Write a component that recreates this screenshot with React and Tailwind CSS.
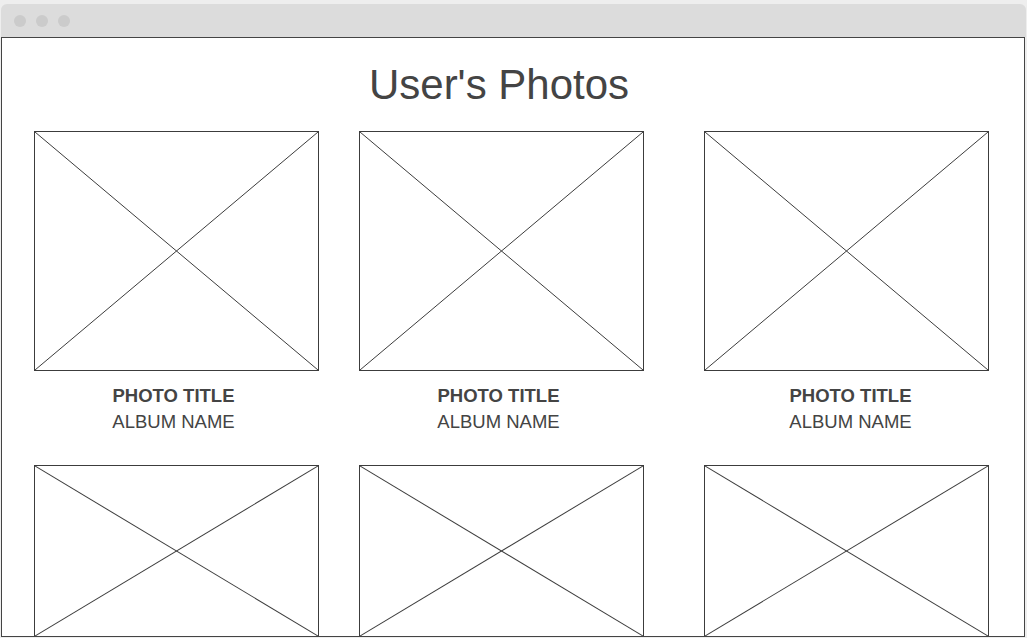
const photos = [0, 1, 2, 3, 4, 5];

function Placeholder({ short }) {
  return (
    <div className={`w-[285px] border border-[#3c3c3c] bg-white ${short ? 'h-[172px]' : 'h-[240px]'}`}>
      <svg width="100%" height="100%" viewBox="0 0 100 100" preserveAspectRatio="none" className="block">
        <line x1="0" y1="0" x2="100" y2="100" stroke="#3c3c3c" strokeWidth="1" vectorEffect="non-scaling-stroke" />
        <line x1="100" y1="0" x2="0" y2="100" stroke="#3c3c3c" strokeWidth="1" vectorEffect="non-scaling-stroke" />
      </svg>
    </div>
  );
}

function PhotoCard({ index }) {
  // third column sits further right in the mockup
  const third = index % 3 === 2;
  // second row is cut by the window edge, captions fall outside
  const lower = index > 2;
  return (
    <div className={third ? 'ml-[20px]' : ''}>
      <Placeholder short={lower} />
      {!lower && (
        <div className={`mt-[12px] text-center text-[18.5px] leading-[26px] text-[#444] ${third ? 'pl-[8px]' : 'pr-[6px]'}`}>
          <div className="font-bold">PHOTO TITLE</div>
          <div>ALBUM NAME</div>
        </div>
      )}
    </div>
  );
}

export default function App() {
  return (
    <div className="w-[1027px] h-[638px] bg-[#eeeeee] pt-[4px] overflow-hidden" style={{ fontFamily: '"Liberation Sans", Arial, sans-serif' }}>
      {/* browser chrome */}
      <div className="ml-[1px] w-[1025px] h-[33px] bg-[#dcdcdc] rounded-t-[6px] flex items-center gap-[10px] pl-[13px]">
        <span className="w-[12px] h-[12px] rounded-full bg-[#cbcbcb]" />
        <span className="w-[12px] h-[12px] rounded-full bg-[#cbcbcb]" />
        <span className="w-[12px] h-[12px] rounded-full bg-[#cbcbcb]" />
      </div>

      {/* page */}
      <div className="ml-[1px] w-[1024px] h-[600px] border border-[#444] bg-white overflow-hidden">
        <h1 className="pt-[22px] pr-[28px] text-center text-[42px] leading-[50px] text-[#444]">User's Photos</h1>
        <div className="mt-[21px] pl-[32px] flex flex-wrap gap-x-[40px] gap-y-[30px] w-[1000px]">
          {photos.map((i) => (
            <PhotoCard key={i} index={i} />
          ))}
        </div>
      </div>
    </div>
  );
}
